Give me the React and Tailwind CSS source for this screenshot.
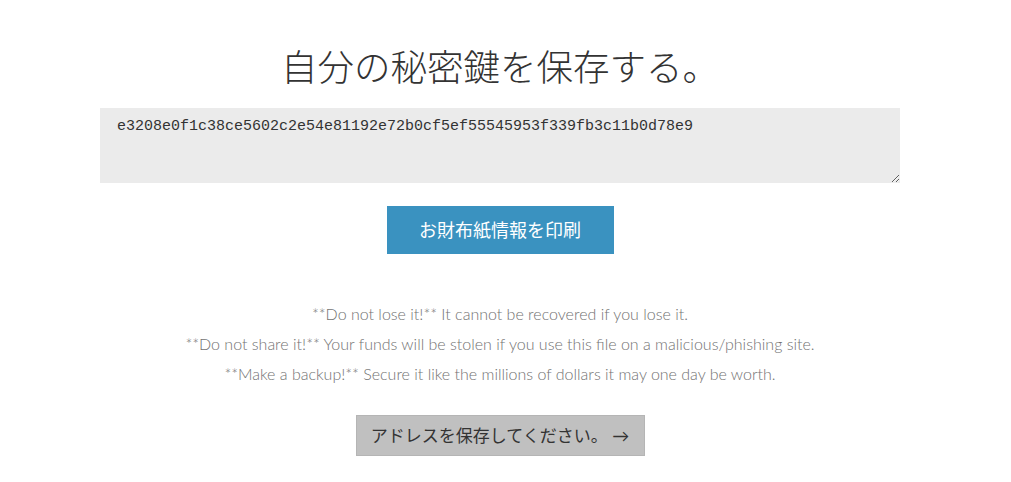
import React from "react";

const KEY = "e3208e0f1c38ce5602c2e54e81192e72b0cf5ef55545953f339fb3c11b0d78e9";

export default function App() {
  return (
    <div className="min-h-[482px] w-[1000px] bg-white flex flex-col items-center pt-[44px]" style={{ fontFamily: "Lato, 'Noto Sans CJK JP', sans-serif" }}>
      <h1 className="text-[36.5px] leading-[46px] font-light text-[#333] text-center" style={{ fontFamily: "Lato, 'Noto Sans CJK JP', sans-serif" }}>
        自分の秘密鍵を保存する。
      </h1>
      <textarea
        readOnly
        value={KEY}
        className="mt-[18px] w-[800px] h-[75px] bg-[#ebebeb] border-0 outline-none pl-[17px] pr-4 py-[10px] text-[15px] leading-[18px] text-[#333]"
        style={{ fontFamily: "'Liberation Mono', monospace" }}
      />
      <button className="mt-[23px] w-[227px] h-[48px] bg-[#3a92c0] text-white text-[18px] flex items-center justify-center">
        お財布紙情報を印刷
      </button>
      <div className="mt-[45px] flex flex-col items-center text-[16px] leading-[30px] text-[#727272] font-light">
        <p>**Do not lose it!** It cannot be recovered if you lose it.</p>
        <p>**Do not share it!** Your funds will be stolen if you use this file on a malicious/phishing site.</p>
        <p>**Make a backup!** Secure it like the millions of dollars it may one day be worth.</p>
      </div>
      <button className="mt-[26px] w-[289px] h-[41px] bg-[#c0c0c0] border border-[#b5b5b5] text-[#333] text-[17px] flex items-center justify-center">
        アドレスを保存してください。 →
      </button>
    </div>
  );
}
